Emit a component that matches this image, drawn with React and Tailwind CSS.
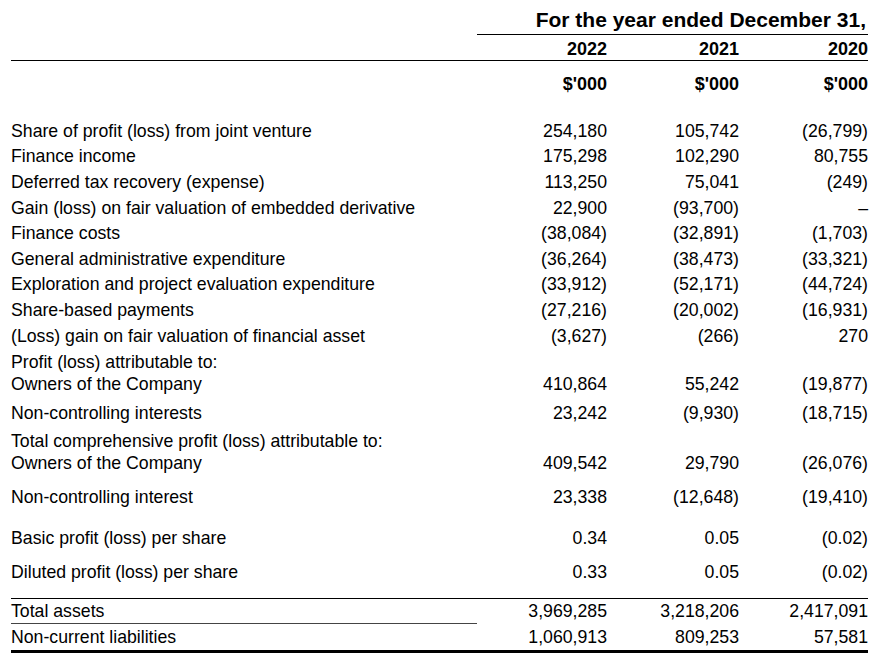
import React from "react";

const mainRows = [
  ["Share of profit (loss) from joint venture", "254,180", "105,742", "(26,799)"],
  ["Finance income", "175,298", "102,290", "80,755"],
  ["Deferred tax recovery (expense)", "113,250", "75,041", "(249)"],
  ["Gain (loss) on fair valuation of embedded derivative", "22,900", "(93,700)", "–"],
  ["Finance costs", "(38,084)", "(32,891)", "(1,703)"],
  ["General administrative expenditure", "(36,264)", "(38,473)", "(33,321)"],
  ["Exploration and project evaluation expenditure", "(33,912)", "(52,171)", "(44,724)"],
  ["Share-based payments", "(27,216)", "(20,002)", "(16,931)"],
  ["(Loss) gain on fair valuation of financial asset", "(3,627)", "(266)", "270"],
];

const Nums = ({ values }) => (
  <>
    {values.map((v, i) => (
      <div key={i} className="text-right leading-[22px]">
        {v}
      </div>
    ))}
  </>
);

const grid = "grid grid-cols-[466px_130px_132px_129px]";

const App = () => {
  return (
    <div className="w-[881px] h-[658px] bg-white text-black font-['Liberation_Sans',Arial,sans-serif] text-[17.7px] pl-[11px] overflow-hidden">
      <div className="w-[857px]">
        {/* heading */}
        <div className={grid}>
          <div></div>
          <div className="col-span-3 h-[35px] border-b border-black flex items-center justify-end pt-[6px] pr-[2px] font-bold text-[21px] leading-[24px]">
            For the year ended December 31,
          </div>
        </div>
        <div className={`${grid} h-[26px] border-b border-black items-center pt-[3px] font-bold text-[18px]`}>
          <div></div>
          <div className="text-right leading-[22px]">2022</div>
          <div className="text-right leading-[22px]">2021</div>
          <div className="text-right leading-[22px]">2020</div>
        </div>
        <div className={`${grid} h-[57px] items-start pt-[12px] font-bold text-[18px]`}>
          <div></div>
          <div className="text-right leading-[22px]">$'000</div>
          <div className="text-right leading-[22px]">$'000</div>
          <div className="text-right leading-[22px]">$'000</div>
        </div>

        {/* body */}
        {mainRows.map(([label, ...vals]) => (
          <div key={label} className={`${grid} h-[25.6px] items-center`}>
            <div className="leading-[22px]">{label}</div>
            <Nums values={vals} />
          </div>
        ))}

        <div className={`${grid} items-end pt-[3px] pb-[4.8px]`}>
          <div className="leading-[22px]">
            <div>Profit (loss) attributable to:</div>
            <div>Owners of the Company</div>
          </div>
          <Nums values={["410,864", "55,242", "(19,877)"]} />
        </div>
        <div className={`${grid} h-[25.6px] items-center`}>
          <div className="leading-[22px]">Non-controlling interests</div>
          <Nums values={["23,242", "(9,930)", "(18,715)"]} />
        </div>

        <div className={`${grid} items-end pt-[4px] pb-[10px]`}>
          <div className="leading-[22px]">
            <div>Total comprehensive profit (loss) attributable to:</div>
            <div>Owners of the Company</div>
          </div>
          <Nums values={["409,542", "29,790", "(26,076)"]} />
        </div>
        <div className={`${grid} h-[25.6px] items-center`}>
          <div className="leading-[22px]">Non-controlling interest</div>
          <Nums values={["23,338", "(12,648)", "(19,410)"]} />
        </div>

        <div className={`${grid} h-[25.6px] items-center mt-[16.3px]`}>
          <div className="leading-[22px]">Basic profit (loss) per share</div>
          <Nums values={["0.34", "0.05", "(0.02)"]} />
        </div>
        <div className={`${grid} h-[25.6px] items-center mt-[7.9px]`}>
          <div className="leading-[22px]">Diluted profit (loss) per share</div>
          <Nums values={["0.33", "0.05", "(0.02)"]} />
        </div>

        {/* totals */}
        <div className={`${grid} mt-[13px] border-t border-black`}>
          <div className="h-[25px] flex items-center border-b border-[#444] leading-[22px]">Total assets</div>
          <div className="h-[25px] flex items-center justify-end leading-[22px]">3,969,285</div>
          <div className="h-[25px] flex items-center justify-end leading-[22px]">3,218,206</div>
          <div className="h-[25px] flex items-center justify-end leading-[22px]">2,417,091</div>
        </div>
        <div className={`${grid} h-[29px] items-center border-b-[3px] border-black`}>
          <div className="leading-[22px]">Non-current liabilities</div>
          <Nums values={["1,060,913", "809,253", "57,581"]} />
        </div>
      </div>
    </div>
  );
};

export default App;
